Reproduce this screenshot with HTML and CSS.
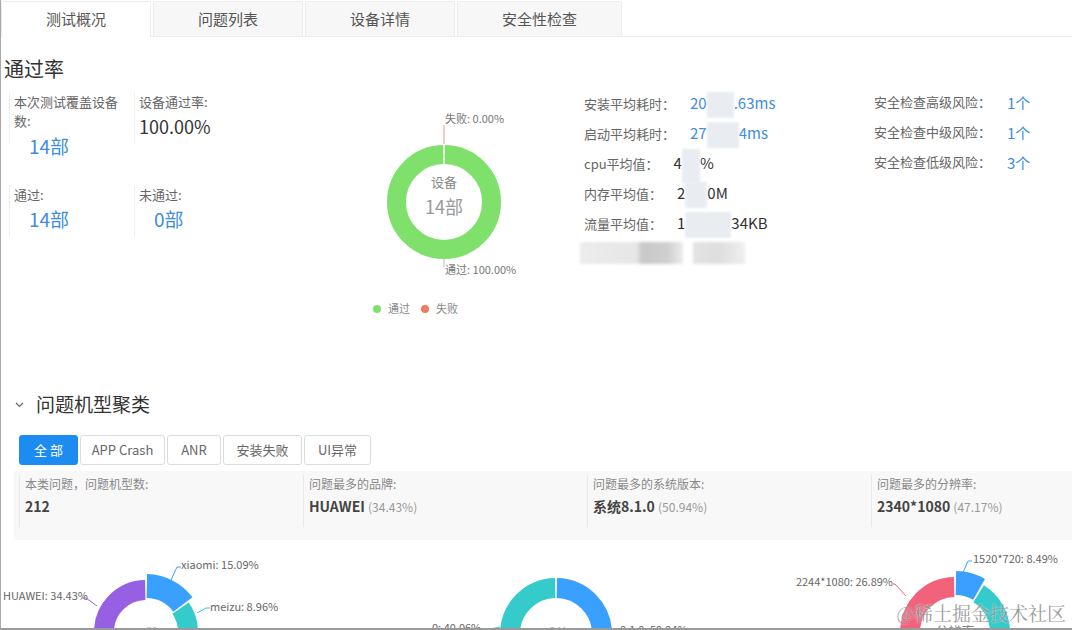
FILE: index.html
```html
<!DOCTYPE html>
<html lang="zh-CN">
<head>
    <meta charset="UTF-8">
    <title>测试概况</title>
    <link rel="stylesheet" href="styles.css">
</head>
<body>
<div class="frame">
    <div class="tabs">
        <div class="tab active">测试概况</div>
        <div class="tab">问题列表</div>
        <div class="tab">设备详情</div>
        <div class="tab">安全性检查</div>
    </div>

    <!-- 通过率 -->
    <h2 class="title">通过率</h2>
    <div class="ov-body">
        <div class="stat-grid">
            <div class="cell">
                <p class="lab">本次测试覆盖设备数:</p>
                <p class="num blue big">14部</p>
            </div>
            <div class="cell">
                <p class="lab">设备通过率:</p>
                <p class="num rate">100.00%</p>
            </div>
            <div class="cell">
                <p class="lab">通过:</p>
                <p class="num blue">14部</p>
            </div>
            <div class="cell">
                <p class="lab">未通过:</p>
                <p class="num blue">0部</p>
            </div>
        </div>

        <svg class="pie" width="310" height="240" viewBox="269 92 310 240">
            <circle cx="444" cy="202" r="47.5" fill="none" stroke="#80e06c" stroke-width="19"/>
            <line x1="444" y1="144" x2="444" y2="164" stroke="#fff" stroke-width="1.5"/>
            <line x1="444" y1="125" x2="444" y2="144" stroke="#f09a88" stroke-width="1"/>
            <line x1="444" y1="259" x2="444" y2="267" stroke="#bbb" stroke-width="1"/>
            <text x="445" y="123" class="pl">失败: 0.00%</text>
            <text x="445" y="274" class="pl">通过: 100.00%</text>
            <text x="444" y="187" class="pc1" text-anchor="middle">设备</text>
            <text x="444" y="214" class="pc2" text-anchor="middle">14部</text>
            <circle cx="377" cy="309" r="4" fill="#80e06c"/>
            <text x="388" y="313" class="lg">通过</text>
            <circle cx="425" cy="309" r="4" fill="#f07a62"/>
            <text x="436" y="313" class="lg">失败</text>
        </svg>

        <div class="perf">
            <div class="row">安装平均耗时：<span class="val blue">20<i class="blur w27"></i>.63ms</span></div>
            <div class="row">启动平均耗时：<span class="val blue">27<i class="blur w32"></i>4ms</span></div>
            <div class="row">cpu平均值：<span class="val">4<i class="blur w18 tall"></i>%</span></div>
            <div class="row">内存平均值：<span class="val">2<i class="blur w22"></i>0M</span></div>
            <div class="row">流量平均值：<span class="val">1<i class="blur w46"></i>34KB</span></div>
            <div class="row masked"><i class="mask m1"></i><i class="mask m2"></i></div>
        </div>

        <div class="risk">
            <div class="row">安全检查高级风险：<span class="cnt">1个</span></div>
            <div class="row">安全检查中级风险：<span class="cnt">1个</span></div>
            <div class="row">安全检查低级风险：<span class="cnt">3个</span></div>
        </div>
    </div>

    <!-- 问题机型聚类 -->
    <div class="cl-head">
        <svg width="9" height="6" viewBox="0 0 9 6"><polyline points="1,1 4.5,4.5 8,1" fill="none" stroke="#666" stroke-width="1.2"/></svg>
        <span>问题机型聚类</span>
    </div>
    <div class="btns">
        <div class="btn on w59">全 部</div>
        <div class="btn w85">APP Crash</div>
        <div class="btn w54">ANR</div>
        <div class="btn w79">安装失败</div>
        <div class="btn w67">UI异常</div>
    </div>
    <div class="summary">
        <div class="col">
            <p class="s-lab">本类问题，问题机型数:</p>
            <p class="s-val">212</p>
        </div>
        <div class="col">
            <p class="s-lab">问题最多的品牌:</p>
            <p class="s-val">HUAWEI <span>(34.43%)</span></p>
        </div>
        <div class="col">
            <p class="s-lab">问题最多的系统版本:</p>
            <p class="s-val">系统8.1.0 <span>(50.94%)</span></p>
        </div>
        <div class="col">
            <p class="s-lab">问题最多的分辨率:</p>
            <p class="s-val">2340*1080 <span>(47.17%)</span></p>
        </div>
    </div>

    <div class="charts">
        <svg width="357" height="88" viewBox="1 540 357 88">
            <g transform="rotate(-90 146 632)" fill="none">
                <circle cx="146" cy="632" r="46" stroke="#3aa0ff" stroke-width="24" pathLength="100" stroke-dasharray="14.49 85.51" stroke-dashoffset="-0.3"/>
                <circle cx="146" cy="632" r="42" stroke="#36cbcb" stroke-width="20" pathLength="100" stroke-dasharray="8.36 91.64" stroke-dashoffset="-15.39"/>
                <circle cx="146" cy="632" r="42" stroke="#4ecb73" stroke-width="20" pathLength="100" stroke-dasharray="15.35 84.65" stroke-dashoffset="-24.35"/>
                <circle cx="146" cy="632" r="42" stroke="#fad337" stroke-width="20" pathLength="100" stroke-dasharray="11.4 88.6" stroke-dashoffset="-40.3"/>
                <circle cx="146" cy="632" r="42" stroke="#f2637b" stroke-width="20" pathLength="100" stroke-dasharray="12.97 87.03" stroke-dashoffset="-52.3"/>
                <circle cx="146" cy="632" r="42" stroke="#975fe4" stroke-width="20" pathLength="100" stroke-dasharray="33.83 66.17" stroke-dashoffset="-65.87"/>
            </g>
            <polyline points="171,580 177,567 181,567" fill="none" stroke="#3aa0ff"/>
            <polyline points="197,613 206,608 210,608" fill="none" stroke="#36cbcb"/>
            <polyline points="97,606 86,598 82,598" fill="none" stroke="#975fe4"/>
            <text x="181" y="569" class="cl">xiaomi: 15.09%</text>
            <text x="210" y="611" class="cl">meizu: 8.96%</text>
            <text x="3" y="600" class="cl">HUAWEI: 34.43%</text>
            <text x="146" y="638" class="cc" text-anchor="middle">品牌</text>
        </svg>
        <svg width="357" height="88" viewBox="358 540 357 88">
            <g transform="rotate(-90 556 634)" fill="none">
                <circle cx="556" cy="634" r="46" stroke="#3aa0ff" stroke-width="20" pathLength="100" stroke-dasharray="59.34 40.66" stroke-dashoffset="-0.3"/>
                <circle cx="556" cy="634" r="46" stroke="#36cbcb" stroke-width="20" pathLength="100" stroke-dasharray="39.46 60.54" stroke-dashoffset="-60.24"/>
            </g>
            <polyline points="490,629 500,627" fill="none" stroke="#36cbcb"/>
            <text x="432" y="632" class="cl">0: 40.06%</text>
            <text x="620" y="634" class="cl">8.1.0: 59.94%</text>
            <text x="556" y="638" class="cc" text-anchor="middle">系统</text>
        </svg>
        <svg width="357" height="88" viewBox="715 540 357 88">
            <g transform="rotate(-90 955 632)" fill="none">
                <circle cx="955" cy="632" r="49" stroke="#3aa0ff" stroke-width="24" pathLength="100" stroke-dasharray="7.89 92.11" stroke-dashoffset="-0.3"/>
                <circle cx="955" cy="632" r="45" stroke="#36cbcb" stroke-width="20" pathLength="100" stroke-dasharray="30.91 69.09" stroke-dashoffset="-8.79"/>
                <circle cx="955" cy="632" r="45" stroke="#fad337" stroke-width="20" pathLength="100" stroke-dasharray="32.51 67.49" stroke-dashoffset="-40.3"/>
                <circle cx="955" cy="632" r="45" stroke="#f2637b" stroke-width="20" pathLength="100" stroke-dasharray="26.29 73.71" stroke-dashoffset="-73.41"/>
            </g>
            <polyline points="962,575 968,561 972,561" fill="none" stroke="#3aa0ff"/>
            <polyline points="906,596 895,584 893,584" fill="none" stroke="#f2637b"/>
            <text x="893" y="586" class="cl" text-anchor="end">2244*1080: 26.89%</text>
            <text x="973" y="563" class="cl">1520*720: 8.49%</text>
            <text x="955" y="636" class="cc" text-anchor="middle">分辨率</text>
        </svg>
    </div>

    <div class="watermark">@稀土掘金技术社区</div>
</div>
</body>
</html>
```

FILE: styles.css
```css
*{
    margin: 0;
    padding: 0;
    box-sizing: border-box;
}
body{
    font-family: "Noto Sans CJK SC", "Noto Sans", sans-serif;
    color: #333;
    background: #fff;
}
.frame{
    position: relative;
    height: 630px;
    overflow: hidden;
    border-left: 1px solid #a9a9a9;
    border-bottom: 2px solid #9a9a9a;
}

/* tabs */
.tabs{
    display: flex;
    align-items: flex-end;
    gap: 2px;
    height: 37px;
    border-bottom: 1px solid #ebebeb;
}
.tab{
    height: 35px;
    line-height: 33px;
    padding: 0 44px;
    font-size: 15px;
    color: #555;
    background: #f7f7f7;
    border: 1px solid #ececec;
    border-bottom: none;
    border-radius: 2px 2px 0 0;
}
.tab.active{
    background: #fff;
    height: 36px;
    margin-bottom: -1px;
}

/* 通过率 */
.title{
    padding: 19px 0 0 3px;
    font-size: 20px;
    line-height: 26px;
    font-weight: normal;
    color: #333;
}
.ov-body{
    display: flex;
    align-items: flex-start;
    margin-top: 10px;
    padding-left: 8px;
}
.stat-grid{
    width: 260px;
    display: grid;
    grid-template-columns: 125px 125px;
    grid-template-rows: 93px auto;
}
.cell{
    border-left: 1px solid #efefef;
    padding-left: 4px;
    height: 52px;
    overflow: visible;
}
.cell .lab{
    font-size: 13px;
    line-height: 19px;
    color: #666;
    width: 112px;
}
.cell .num{
    font-size: 19px;
    line-height: 26px;
    margin-top: 2px;
    padding-left: 15px;
}
.cell .num.big{
    margin-top: 3px;
}
.cell .num.rate{
    padding-left: 0;
    font-size: 18px;
    color: #333;
}
.blue{
    color: #3d8de0;
}
.pie{
    display: block;
    flex: none;
}
.pie .pl{
    font-size: 11px;
    fill: #777;
}
.pie .pc1{
    font-size: 13px;
    fill: #888;
}
.pie .pc2{
    font-size: 18px;
    fill: #999;
}
.pie .lg{
    font-size: 11px;
    fill: #888;
}

.perf{
    width: 290px;
    margin-left: 5px;
    margin-top: -4px;
    flex: none;
}
.perf .row, .risk .row{
    height: 30px;
    line-height: 30px;
    font-size: 13px;
    color: #666;
    white-space: nowrap;
}
.perf .val{
    margin-left: 15px;
    font-size: 15px;
    color: #333;
}
.perf .val.blue{
    color: #3d8de0;
}
.blur{
    display: inline-block;
    height: 26px;
    vertical-align: middle;
    background: #e9edf2;
    filter: blur(1px);
}
.blur.tall{
    height: 34px;
    vertical-align: -14px;
}
.w18{ width: 18px; }
.w22{ width: 22px; }
.w27{ width: 27px; }
.w32{ width: 32px; }
.w46{ width: 46px; }
.perf .masked{
    display: flex;
    gap: 10px;
    align-items: center;
    margin-left: -4px;
}
.mask{
    display: block;
    height: 22px;
    filter: blur(1.5px);
}
.mask.m1{
    width: 103px;
    background: linear-gradient(90deg, #ececec 0, #e6e6e6 55%, #c9c9c9 60%, #cfcfcf 85%, #ececec 100%);
}
.mask.m2{
    width: 52px;
    background: linear-gradient(90deg, #e3e3e3 0, #dedede 50%, #efefef 100%);
}

.risk{
    margin-top: -6px;
    flex: none;
}
.risk .cnt{
    margin-left: 16px;
    font-size: 15px;
    color: #3d8de0;
    position: relative;
    top: 2px;
}

/* 问题机型聚类 */
.cl-head{
    display: flex;
    align-items: center;
    height: 26px;
    margin-top: 58px;
    padding-left: 14px;
    font-size: 19px;
    color: #333;
}
.cl-head svg{
    margin-right: 12px;
    margin-top: 4px;
}
.btns{
    display: flex;
    gap: 2px;
    margin-top: 19px;
    padding-left: 18px;
}
.btn{
    height: 30px;
    line-height: 28px;
    text-align: center;
    font-size: 13px;
    color: #666;
    border: 1px solid #dcdcdc;
    border-radius: 3px;
    background: #fff;
}
.btn.on{
    background: #1d8cf0;
    border-color: #1d8cf0;
    color: #fff;
}
.w59{ width: 59px; }
.w85{ width: 85px; }
.w54{ width: 54px; }
.w79{ width: 79px; }
.w67{ width: 67px; }

.summary{
    display: grid;
    grid-template-columns: repeat(4, 284px);
    height: 69px;
    margin: 6px 0 0 13px;
    padding-left: 5px;
    background: #f8f8f8;
}
.col{
    margin-top: 4px;
    height: 52px;
    border-left: 1px solid #e8e8e8;
    padding-left: 5px;
}
.s-lab{
    font-size: 12px;
    line-height: 18px;
    color: #888;
}
.s-val{
    margin-top: 3px;
    font-size: 14px;
    line-height: 20px;
    font-weight: bold;
    color: #444;
}
.s-val span{
    font-size: 12px;
    font-weight: normal;
    color: #999;
}

.charts{
    display: flex;
}
.charts svg{
    display: block;
}
.charts .cl{
    font-size: 11px;
    fill: #666;
}
.charts .cc{
    font-size: 13px;
    fill: #888;
}

.watermark{
    position: absolute;
    right: 6px;
    bottom: 2px;
    font-size: 19px;
    font-family: "Noto Serif CJK SC", "Noto Sans CJK SC", serif;
    color: rgba(120, 120, 120, 0.75);
    text-shadow: 0 0 2px #fff;
}
```
